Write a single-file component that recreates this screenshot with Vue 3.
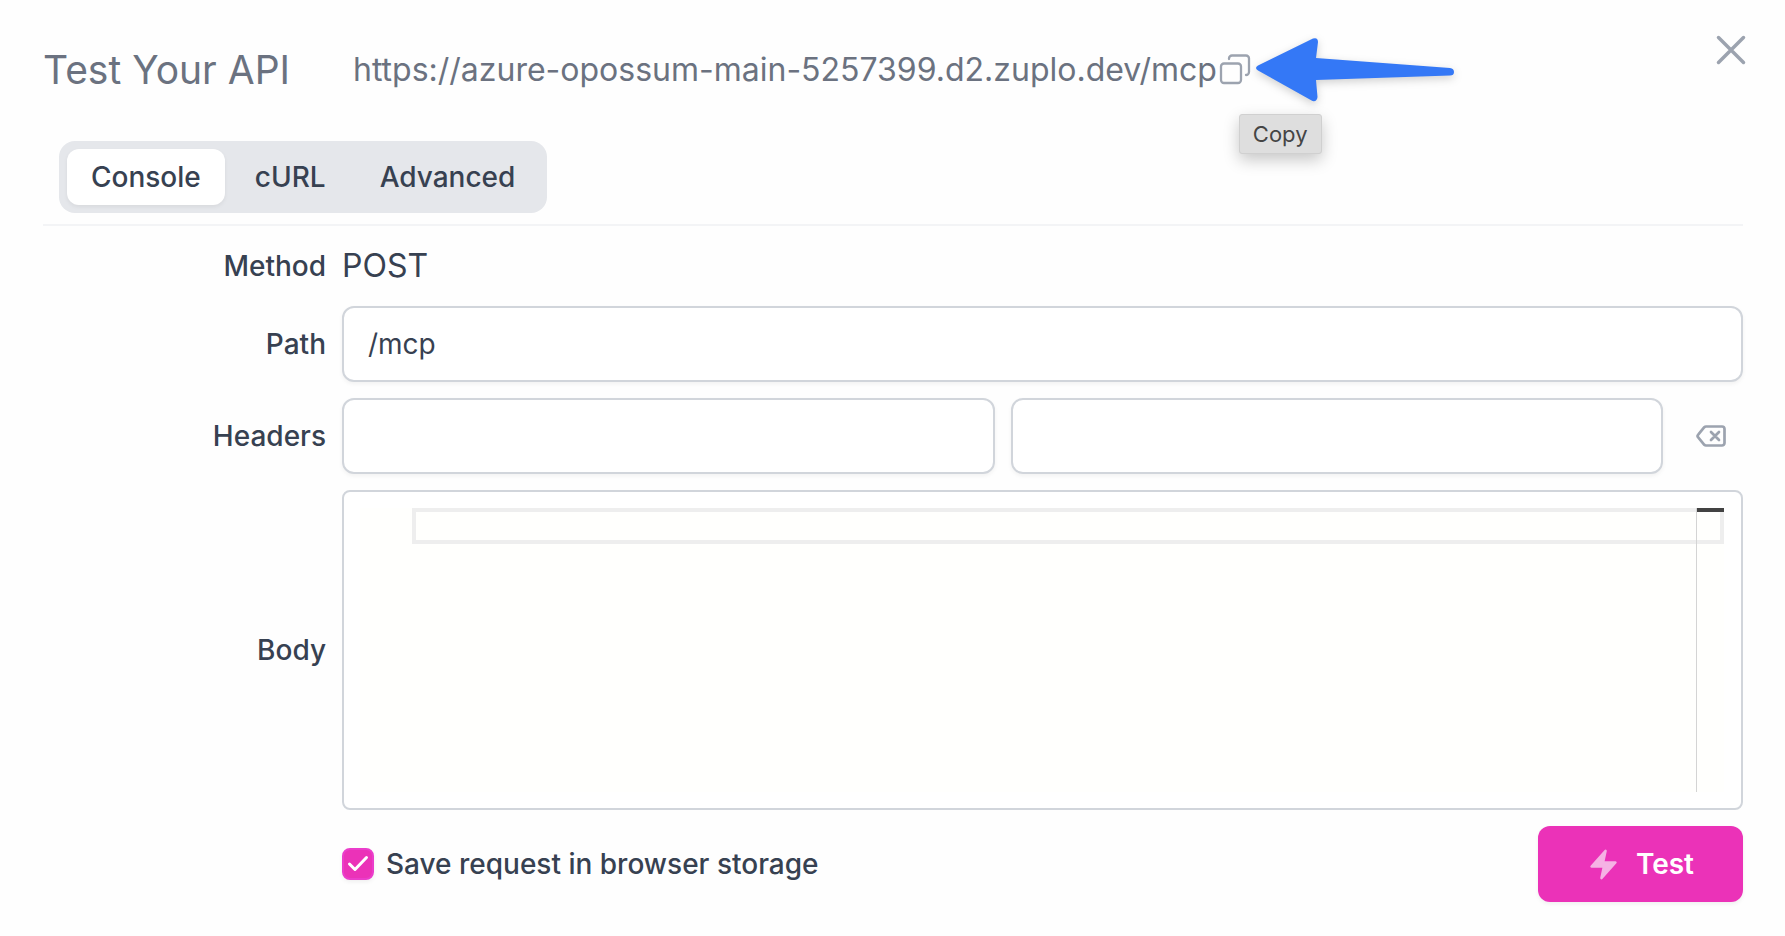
<script setup>
import { ref } from 'vue'

const tabs = ['Console', 'cURL', 'Advanced']
const activeTab = ref('Console')
const path = ref('/mcp')
const headerName = ref('')
const headerValue = ref('')
const body = ref('')
const save = ref(true)

function clearHeader() {
  headerName.value = ''
  headerValue.value = ''
}
</script>

<template>
  <main class="dialog">
    <header class="top">
      <h1>Test Your API</h1>
      <div class="endpoint">
        <span class="url">https://azure-opossum-main-5257399.d2.zuplo.dev/mcp</span>
        <span class="copy-wrap">
          <button class="icon-button" type="button" aria-label="Copy URL">
            <svg width="32" height="32" viewBox="0 0 32 32" fill="none" stroke="currentColor" stroke-width="2.300" stroke-linecap="round">
              <rect x="2" y="9.500" width="20" height="19.500" rx="3" />
              <path d="M10 5V4.500a3 3 0 0 1 3-3h14a3 3 0 0 1 3 3v13.500a3 3 0 0 1-3 3" />
            </svg>
          </button>
          <span class="tooltip" role="tooltip">Copy</span>
          <svg class="arrow" width="204" height="68" viewBox="0 0 204 68" aria-hidden="true">
            <path d="M3 29.500 58 2.500Q63 1 63 6L61 22 195 32Q199 32.500 199 36 199 39.500 195 39.500L61 44 62.500 61Q62 66 57.500 65L3 34.500Q-1 32 3 29.500Z" fill="#3478f6" />
          </svg>
        </span>
      </div>
      <button class="icon-button close" type="button" aria-label="Close">
        <svg width="32" height="32" viewBox="0 0 32 32" fill="none" stroke="currentColor" stroke-width="3.500" stroke-linecap="round">
          <path d="M3.500 3.500l25 25M28.500 3.500l-25 25" />
        </svg>
      </button>
    </header>

    <div class="tab-row">
      <div class="tabs" role="tablist">
        <button
          v-for="tab in tabs"
          :key="tab"
          type="button"
          role="tab"
          class="tab"
          :class="{ active: tab === activeTab }"
          :aria-selected="tab === activeTab"
          @click="activeTab = tab"
        >{{ tab }}</button>
      </div>
    </div>

    <form class="form" @submit.prevent>
      <span class="label">Method</span>
      <span class="method">POST</span>

      <label class="label" for="path">Path</label>
      <input id="path" v-model="path" class="field" type="text" />

      <label class="label" for="header-name">Headers</label>
      <div class="header-row">
        <input id="header-name" v-model="headerName" class="field" type="text" aria-label="Header name" />
        <input v-model="headerValue" class="field" type="text" aria-label="Header value" />
        <button class="icon-button clear" type="button" aria-label="Remove header" @click="clearHeader">
          <svg width="32" height="24" viewBox="0 0 32 24" fill="none" stroke="currentColor" stroke-width="2.700" stroke-linecap="round" stroke-linejoin="round">
            <path d="M11 2.500h16a2.500 2.500 0 0 1 2.500 2.500v14a2.500 2.500 0 0 1-2.500 2.500H11q-1 0-1.700-.7L3.200 13.400q-1.300-1.400 0-2.800L9.300 3.200Q10 2.500 11 2.500ZM16 8l8 8M24 8l-8 8" />
          </svg>
        </button>
      </div>

      <label class="label" for="body">Body</label>
      <div class="editor">
        <div class="editor-view">
          <div class="current-line"></div>
          <div class="ruler"></div>
          <textarea id="body" v-model="body" spellcheck="false"></textarea>
        </div>
      </div>

      <div class="footer">
        <label class="save">
          <span class="box">
            <input v-model="save" type="checkbox" />
            <svg v-if="save" class="tick" width="32" height="32" viewBox="0 0 32 32" fill="none" stroke="#fff" stroke-width="3" stroke-linecap="round" stroke-linejoin="round" aria-hidden="true">
              <path d="M7.500 16l5.500 5.500L24.500 9.500" />
            </svg>
          </span>
          <span>Save request in browser storage</span>
        </label>
        <button class="test" type="submit">
          <svg width="33" height="33" viewBox="0 0 20 20" fill="currentColor" aria-hidden="true">
            <path d="M11.983 1.907a.75.75 0 0 0-1.292-.657l-8.500 9.500A.75.75 0 0 0 2.750 12h6.572l-1.305 6.093a.75.75 0 0 0 1.292.657l8.500-9.500A.75.75 0 0 0 17.250 8h-6.572l1.305-6.093Z" />
          </svg>
          <span>Test</span>
        </button>
      </div>
    </form>
  </main>
</template>

<style>
body {
  background: #fefefe;
}
</style>

<style scoped>
* {
  box-sizing: border-box;
}
.dialog {
  padding: 30px 42px 34px 43px;
  color: #374151;
  font-family: Inter, "Liberation Sans", sans-serif;
  font-size: 28px;
  line-height: 40px;
}
button,
input,
textarea {
  margin: 0;
  padding: 0;
  border: 0;
  color: inherit;
  font: inherit;
}
button {
  background: none;
  cursor: pointer;
}
svg {
  display: block;
}
.top {
  display: flex;
  align-items: center;
  height: 80px;
  color: #6b7280;
}
h1 {
  margin: 0;
  width: 310px;
  font-size: 39px;
  font-weight: 400;
  white-space: nowrap;
}
.endpoint {
  display: flex;
  align-items: center;
  gap: 2px;
  flex: 1;
  font-size: 32px;
}
.icon-button {
  display: block;
  color: #9ca3af;
}
.copy-wrap {
  position: relative;
}
.tooltip {
  position: absolute;
  top: 60px;
  left: 20px;
  padding: 0 13px;
  border: 1px solid #d0d0d0;
  border-radius: 3px;
  background: #dedede;
  box-shadow: 0 6px 16px rgba(0, 0, 0, 0.22);
  color: #454545;
  font-size: 22px;
  line-height: 38px;
}
.arrow {
  position: absolute;
  top: -18px;
  left: 36px;
  filter: drop-shadow(0 3px 4px rgba(0, 0, 0, 0.18));
}
.close {
  align-self: flex-start;
  margin-top: 4px;
  margin-right: -4px;
}
.tab-row {
  padding: 31px 16px 11px;
  border-bottom: 2px solid #f3f4f6;
}
.tabs {
  display: inline-flex;
  gap: 6px;
  padding: 8px;
  border-radius: 16px;
  background: #e5e7eb;
  vertical-align: top;
}
.tab {
  padding: 8px 24px;
  border-radius: 12px;
  font-weight: 500;
}
.tab.active {
  background: #fff;
  box-shadow: 0 2px 4px rgba(0, 0, 0, 0.06);
}
.form {
  display: grid;
  grid-template-columns: 283px 1fr;
  gap: 16px;
  align-items: center;
  padding-top: 16px;
}
.label {
  text-align: right;
  font-weight: 500;
}
.method {
  padding: 4px 0;
  font-size: 32px;
}
.field {
  width: 100%;
  min-width: 0;
  height: 76px;
  padding: 0 24px;
  border: 2px solid #d1d5db;
  border-radius: 12px;
  background: #fff;
  box-shadow: 0 2px 4px rgba(0, 0, 0, 0.05);
}
.header-row {
  display: flex;
  align-items: center;
  gap: 16px;
}
.clear {
  padding: 20px 16px;
}
.editor {
  padding: 16px 17px 16px 16px;
  border: 2px solid #d1d5db;
  border-radius: 8px;
  background: #fff;
}
.editor-view {
  position: relative;
  height: 284px;
  padding-left: 52px;
  background: #fffffd;
}
.editor textarea {
  position: relative;
  display: block;
  width: 100%;
  height: 100%;
  padding: 0 36px 0 4px;
  background: transparent;
  font-family: "Liberation Mono", monospace;
  font-size: 24px;
  line-height: 36px;
  outline: none;
  resize: none;
}
.current-line {
  position: absolute;
  top: 0;
  right: 0;
  left: 52px;
  height: 36px;
  border: 4px solid #eee;
}
.ruler {
  position: absolute;
  top: 0;
  right: 0;
  bottom: 0;
  width: 28px;
  border-left: 1px solid #d4d4d4;
}
.ruler::before {
  content: "";
  display: block;
  height: 4px;
  background: #434343;
}
.footer {
  grid-column: 2;
  display: flex;
  align-items: center;
  justify-content: space-between;
}
.save {
  display: flex;
  align-items: center;
  gap: 12px;
  font-weight: 500;
}
.box {
  position: relative;
}
.box input {
  display: block;
  width: 32px;
  height: 32px;
  border: 2px solid #d1d5db;
  border-radius: 8px;
  appearance: none;
  box-shadow: 0 2px 4px rgba(0, 0, 0, 0.06);
}
.box input:checked {
  border-color: #eb3dcb;
  background: #eb32b8;
}
.tick {
  position: absolute;
  top: 0;
  left: 0;
  pointer-events: none;
}
.test {
  display: flex;
  align-items: center;
  gap: 16px;
  height: 76px;
  padding: 0 49px;
  border-radius: 12px;
  background: #eb32b8;
  box-shadow: 0 2px 4px rgba(0, 0, 0, 0.06);
  color: #fff;
  font-weight: 600;
}
.test svg {
  color: #f5b2e4;
}
</style>
